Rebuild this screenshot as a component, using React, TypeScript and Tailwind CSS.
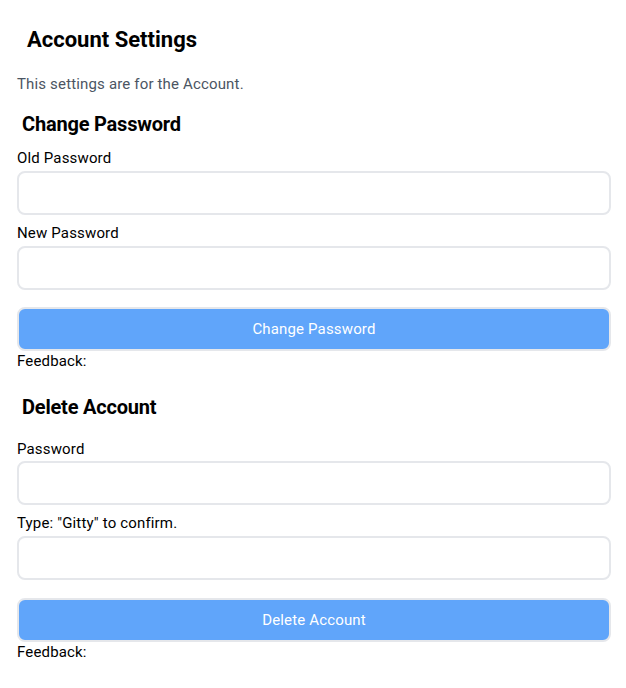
export default function App() {
  const field = "w-full h-[44px] rounded-lg border-2 border-[#e5e7eb] bg-white px-3 outline-none";
  const btn = "w-full h-[44px] rounded-lg border-2 border-[#e5e7eb] bg-[#60a5fa] text-white text-[15px] tracking-[0.16px]";
  const label = "block text-[15px] leading-[20px] tracking-[0.16px]";
  return (
    <div className="min-h-screen bg-white font-['Roboto',sans-serif] text-black">
      <div className="pl-[17px] pr-[15px] pt-[26px]">
        <h1 className="pl-[10px] text-[22px] font-bold leading-[28px]">Account Settings</h1>
        <p className="mt-[20px] text-[15px] leading-[20px] tracking-[0.16px] text-[#4b5563]">This settings are for the Account.</p>

        <h2 className="mt-[16px] pl-[5px] text-[20px] font-bold leading-[28px] tracking-[-0.2px]">Change Password</h2>
        <label className={`mt-[10px] ${label}`}>Old Password</label>
        <input type="password" className={`mt-[3px] ${field}`} />
        <label className={`mt-[8px] ${label}`}>New Password</label>
        <input type="password" className={`mt-[3px] ${field}`} />
        <button className={`mt-[17px] ${btn}`}>Change Password</button>
        <p className="text-[15px] leading-[20px] tracking-[0.16px]">Feedback:</p>

        <h2 className="mt-[22px] pl-[5px] text-[20px] font-bold leading-[28px] tracking-[-0.2px]">Delete Account</h2>
        <label className={`mt-[18px] ${label}`}>Password</label>
        <input type="password" className={`mt-[2px] ${field}`} />
        <label className={`mt-[8px] ${label}`}>Type: "Gitty" to confirm.</label>
        <input type="text" className={`mt-[3px] ${field}`} />
        <button className={`mt-[18px] ${btn}`}>Delete Account</button>
        <p className="text-[15px] leading-[20px] tracking-[0.16px]">Feedback:</p>
      </div>
    </div>
  );
}
